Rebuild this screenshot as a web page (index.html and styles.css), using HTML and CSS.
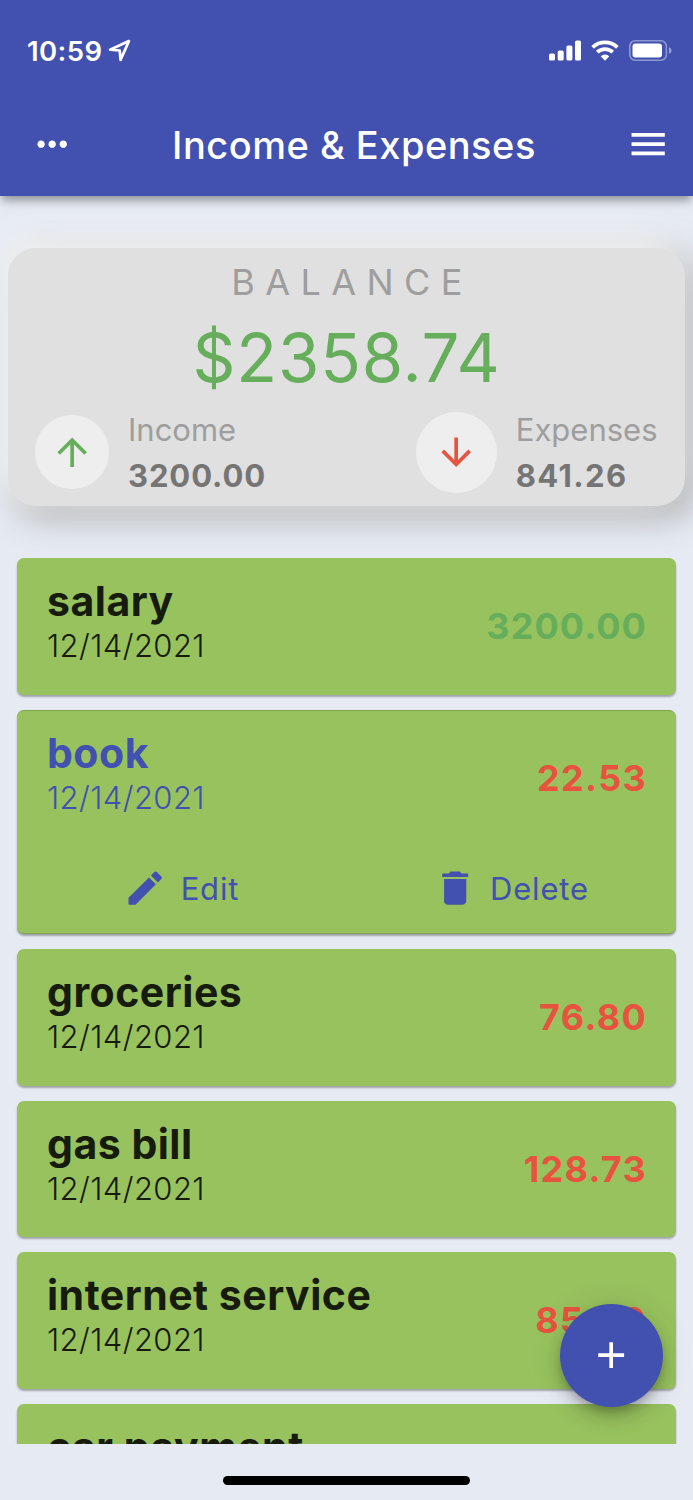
FILE: index.html
```html
<!DOCTYPE html>
<html lang="en">
<head>
    <meta charset="UTF-8">
    <meta name="viewport" content="width=device-width, initial-scale=1.0">
    <title>Income &amp; Expenses</title>
    <link rel="stylesheet" href="styles.css">
</head>
<body>
    <header class="app-bar">
        <div class="status-bar">
            <div class="status-left">
                <span class="time">10:59</span>
                <svg class="location" viewBox="0 0 22 22"><path d="M20 2 L2 10.2 L11.2 11 L12 20 Z"/></svg>
            </div>
            <div class="status-right">
                <svg class="signal" viewBox="0 0 33 21">
                    <rect x="0" y="13.5" width="6" height="7" rx="1.6"/>
                    <rect x="8.7" y="10.5" width="6" height="10" rx="1.6"/>
                    <rect x="17.4" y="5.5" width="6" height="15" rx="1.6"/>
                    <rect x="26" y="0.5" width="6" height="20" rx="1.6"/>
                </svg>
                <svg class="wifi" viewBox="0 0 28 21">
                    <path class="arc" d="M1.6 7.3 A18 18 0 0 1 26.4 7.3"/>
                    <path class="arc" d="M6.2 12.2 A11.3 11.3 0 0 1 21.8 12.2"/>
                    <path d="M9.7 16.3 A6.3 6.3 0 0 1 18.3 16.3 L14 20.7 Z"/>
                </svg>
                <svg class="battery" viewBox="0 0 43 21">
                    <rect class="shell" x="0.8" y="0.8" width="36.6" height="19.4" rx="5.4"/>
                    <rect x="3.5" y="3.5" width="29.5" height="14" rx="3"/>
                    <path class="tip" d="M40 7.2 C43.4 8.4 43.4 12.6 40 13.8 Z"/>
                </svg>
            </div>
        </div>
        <div class="title-bar">
            <svg class="icon" viewBox="0 0 24 24"><path d="M6 10c-1.1 0-2 .9-2 2s.9 2 2 2 2-.9 2-2-.9-2-2-2zm12 0c-1.1 0-2 .9-2 2s.9 2 2 2 2-.9 2-2-.9-2-2-2zm-6 0c-1.1 0-2 .9-2 2s.9 2 2 2 2-.9 2-2-.9-2-2-2z"/></svg>
            <h1>Income &amp; Expenses</h1>
            <svg class="icon" viewBox="0 0 24 24"><path d="M3 18h18v-2H3v2zm0-5h18v-2H3v2zm0-7v2h18V6H3z"/></svg>
        </div>
    </header>

    <main class="content">
        <!-- Balance summary -->
        <section class="summary">
            <p class="summary-label">BALANCE</p>
            <p class="summary-total">$2358.74</p>
            <div class="summary-row">
                <div class="summary-item">
                    <div class="circle circle-income">
                        <svg class="icon" viewBox="0 0 24 24"><path d="M4 12l1.41 1.41L11 7.83V20h2V7.83l5.58 5.59L20 12l-8-8-8 8z"/></svg>
                    </div>
                    <div class="item-text">
                        <p class="item-label">Income</p>
                        <p class="item-value">3200.00</p>
                    </div>
                </div>
                <div class="summary-item">
                    <div class="circle circle-expense">
                        <svg class="icon" viewBox="0 0 24 24"><path d="M20 12l-1.41-1.41L13 16.17V4h-2v12.17l-5.58-5.59L4 12l8 8 8-8z"/></svg>
                    </div>
                    <div class="item-text">
                        <p class="item-label">Expenses</p>
                        <p class="item-value value-expense">841.26</p>
                    </div>
                </div>
            </div>
        </section>

        <!-- Transactions -->
        <section class="list">
            <article class="card">
                <div class="card-row">
                    <div>
                        <h2>salary</h2>
                        <p class="date">12/14/2021</p>
                    </div>
                    <span class="amount income">3200.00</span>
                </div>
            </article>
            <article class="card open">
                <div class="card-row">
                    <div>
                        <h2>book</h2>
                        <p class="date">12/14/2021</p>
                    </div>
                    <span class="amount">22.53</span>
                </div>
                <div class="actions">
                    <button type="button">
                        <svg class="icon" viewBox="0 0 24 24"><path d="M3 17.25V21h3.75L17.81 9.94l-3.75-3.75L3 17.25zM20.71 7.04c.39-.39.39-1.02 0-1.41l-2.34-2.34c-.39-.39-1.02-.39-1.41 0l-1.83 1.83 3.75 3.75 1.83-1.83z"/></svg>
                        <span>Edit</span>
                    </button>
                    <button type="button">
                        <svg class="icon" viewBox="0 0 24 24"><path d="M6 19c0 1.1.9 2 2 2h8c1.1 0 2-.9 2-2V7H6v12zM19 4h-3.5l-1-1h-5l-1 1H5v2h14V4z"/></svg>
                        <span>Delete</span>
                    </button>
                </div>
            </article>
            <article class="card">
                <div class="card-row">
                    <div>
                        <h2>groceries</h2>
                        <p class="date">12/14/2021</p>
                    </div>
                    <span class="amount">76.80</span>
                </div>
            </article>
            <article class="card">
                <div class="card-row">
                    <div>
                        <h2>gas bill</h2>
                        <p class="date">12/14/2021</p>
                    </div>
                    <span class="amount">128.73</span>
                </div>
            </article>
            <article class="card">
                <div class="card-row">
                    <div>
                        <h2>internet service</h2>
                        <p class="date">12/14/2021</p>
                    </div>
                    <span class="amount">85.00</span>
                </div>
            </article>
            <article class="card">
                <div class="card-row">
                    <div>
                        <h2>car payment</h2>
                    </div>
                </div>
            </article>
        </section>
    </main>

    <footer class="home-area">
        <div class="home-indicator"></div>
    </footer>

    <button type="button" class="fab" aria-label="Add">
        <svg class="icon" viewBox="0 0 24 24"><path d="M19 13h-6v6h-2v-6H5v-2h6V5h2v6h6v2z"/></svg>
    </button>
</body>
</html>
```
FILE: styles.css
```css
* {
    box-sizing: border-box;
}

body {
    margin: 0;
    height: 1500px;
    display: flex;
    flex-direction: column;
    position: relative;
    overflow: hidden;
    background-color: #e6ebf3;
    font-family: Inter, "Liberation Sans", sans-serif;
    color: #161b0c;
}

h1, h2, p {
    margin: 0;
    white-space: nowrap;
}

svg {
    display: block;
    flex: none;
    fill: currentColor;
}

button {
    border: none;
    padding: 0;
    background: none;
    color: inherit;
    font-family: inherit;
    cursor: pointer;
}

.icon {
    width: 44.35px;
    height: 44.35px;
}

/* Header */
.app-bar {
    flex: none;
    height: 195.5px;
    background-color: #4250af;
    color: white;
    box-shadow: 0 6px 8px -2px rgba(0, 0, 0, 0.32), 0 6px 14px rgba(0, 0, 0, 0.08);
    position: relative;
    z-index: 1;
}

.status-bar {
    height: 94px;
    padding: 7px 21px 0 27px;
    display: flex;
    justify-content: space-between;
    align-items: center;
}

.status-left, .status-right {
    display: flex;
    align-items: center;
}

.time {
    font-size: 27.5px;
    font-weight: 600;
    letter-spacing: 0.4px;
}

.location {
    width: 23px;
    height: 23px;
    margin-left: 6px;
    fill: none;
    stroke: white;
    stroke-width: 2.6;
    stroke-linejoin: round;
}

.signal {
    width: 33px;
    height: 21px;
}

.wifi {
    width: 28px;
    height: 21px;
    margin-left: 9px;
}

.arc {
    fill: none;
    stroke: white;
    stroke-width: 3.8;
}

.battery {
    width: 43px;
    height: 21px;
    margin-left: 10px;
}

.shell {
    fill: none;
    stroke: white;
    stroke-width: 1.6;
    opacity: 0.4;
}

.tip {
    opacity: 0.45;
}

.title-bar {
    height: 101px;
    padding: 0 23px 0 30px;
    display: flex;
    justify-content: space-between;
    align-items: center;
}

h1 {
    font-size: 38px;
    font-weight: 500;
    letter-spacing: 0.5px;
    padding: 0 0 0 8px;
}

/* Scroll area */
.content {
    flex: none;
    height: 1248.5px;
    padding: 52px 8px 0;
    overflow: hidden;
}

.summary {
    height: 258.5px;
    border-radius: 28px;
    background-color: #e0e0e0;
    box-shadow: -7px -7px 34px 3px #f8f8f8, 7px 7px 34px 3px #9e9e9e;
    text-align: center;
}

.summary-label {
    padding: 11px 0 0 11px;
    line-height: 46px;
    font-size: 36px;
    letter-spacing: 10.4px;
    color: #9e9e9e;
}

.summary-total {
    margin-top: 1px;
    line-height: 104px;
    font-size: 67px;
    letter-spacing: 0.8px;
    color: #66ae5b;
}

.summary-row {
    height: 81px;
    margin-top: 2px;
    padding: 0 27.5px 0 27px;
    display: flex;
    justify-content: space-between;
    align-items: center;
    text-align: left;
}

.summary-item {
    display: flex;
    align-items: center;
    gap: 19px;
}

.item-text {
    padding-top: 1px;
}

.circle {
    border-radius: 50%;
    background-color: #eeeeee;
    display: flex;
    justify-content: center;
    align-items: center;
}

.circle-income {
    width: 74px;
    height: 74px;
    color: #66ae5b;
}

.circle-expense {
    width: 81px;
    height: 81px;
    color: #e7533f;
}

.item-label, .item-value {
    line-height: 46px;
    font-size: 31px;
}

.item-label {
    color: #9e9e9e;
}

.item-value {
    font-weight: 700;
    letter-spacing: 0.9px;
    color: #757575;
}

.value-expense {
    letter-spacing: 1.4px;
}

/* Transaction cards */
.list {
    margin-top: 52px;
    padding: 0 9px;
    display: flex;
    flex-direction: column;
    gap: 15px;
}

.card {
    height: 136.5px;
    border-radius: 7px;
    background-color: #98c25e;
    box-shadow: 0 2px 2px rgba(0, 0, 0, 0.3);
}

.card-row {
    height: 136px;
    padding: 18.3px 29px 22px 30px;
    display: flex;
    justify-content: space-between;
}

h2 {
    line-height: 51px;
    font-size: 41px;
    font-weight: 650;
    letter-spacing: 0.5px;
}

.date {
    line-height: 38px;
    font-size: 31px;
    font-weight: 350;
    letter-spacing: 0.4px;
}

.amount {
    line-height: 100px;
    font-size: 36px;
    font-weight: 650;
    letter-spacing: 1.3px;
    color: #e7533f;
}

.amount.income {
    letter-spacing: 1.1px;
    color: #66ae5b;
}

.card.open {
    height: 224.5px;
    border-top: 1px solid #7fa24e;
    border-bottom: 1px solid #7fa24e;
    color: #4250af;
}

.open .card-row {
    margin-top: -1px;
}

.actions {
    height: 88px;
    display: flex;
}

.actions button {
    flex: 1;
    display: flex;
    align-items: center;
    justify-content: center;
    gap: 13px;
    font-size: 31px;
    letter-spacing: 0.8px;
    padding: 0 1px 2px 0;
}

/* Bottom area */
.home-area {
    flex: 1;
    display: flex;
    justify-content: center;
    padding-top: 32px;
}

.home-indicator {
    width: 247px;
    height: 9px;
    border-radius: 5px;
    background-color: black;
}

.fab {
    position: absolute;
    right: 30px;
    bottom: 93px;
    width: 103px;
    height: 103px;
    border-radius: 50%;
    display: flex;
    align-items: center;
    justify-content: center;
    background-color: #4250af;
    color: white;
    box-shadow: 0 6px 9px -2px rgba(0, 0, 0, 0.2), 0 11px 18px rgba(0, 0, 0, 0.14), 0 2px 33px rgba(0, 0, 0, 0.12);
}
```
